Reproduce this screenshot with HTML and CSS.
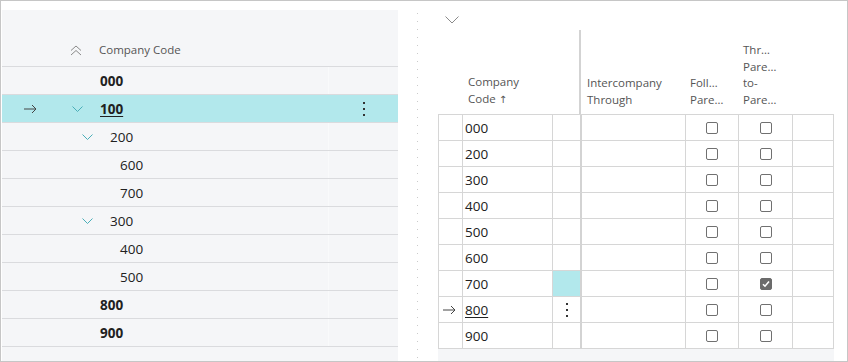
FILE: index.html
```html
<!DOCTYPE html>
<html lang="en">
<head>
  <meta charset="UTF-8" />
  <title>Company Hierarchy</title>
  <link rel="stylesheet" href="styles.css">
</head>
<body>
  <div class="frame">

    <div class="tree">
      <div class="tree-head">
        <span class="collapse-all">
          <svg width="12" height="11" viewBox="0 0 12 11"><path d="M1 5.5 6 1l5 4.5M1 10 6 5.5l5 4.5" fill="none" stroke="#8a8a8a" stroke-width="1"/></svg>
        </span>
        <span class="tree-title">Company Code</span>
      </div>

      <div class="tree-row">
        <div class="t-main"><span class="mark"></span><span class="exp"></span><span class="code bold">000</span></div>
        <div class="t-side"></div>
      </div>
      <div class="tree-row selected">
        <div class="t-main">
          <span class="mark"><svg width="13" height="10" viewBox="0 0 13 10"><path d="M0 5h12M8 1l4 4-4 4" fill="none" stroke="#444" stroke-width="1"/></svg></span>
          <span class="exp"><svg width="11" height="6" viewBox="0 0 11 6"><path d="M.5.5 5.5 5.5 10.5.5" fill="none" stroke="#4aaeb8" stroke-width="1"/></svg></span>
          <span class="code bold link">100</span>
        </div>
        <div class="t-side"><span class="dots"><i></i><i></i><i></i></span></div>
      </div>
      <div class="tree-row lvl1">
        <div class="t-main"><span class="mark"></span><span class="exp"><svg width="11" height="6" viewBox="0 0 11 6"><path d="M.5.5 5.5 5.5 10.5.5" fill="none" stroke="#4aaeb8" stroke-width="1"/></svg></span><span class="code">200</span></div>
        <div class="t-side"></div>
      </div>
      <div class="tree-row lvl2">
        <div class="t-main"><span class="mark"></span><span class="exp"></span><span class="code">600</span></div>
        <div class="t-side"></div>
      </div>
      <div class="tree-row lvl2">
        <div class="t-main"><span class="mark"></span><span class="exp"></span><span class="code">700</span></div>
        <div class="t-side"></div>
      </div>
      <div class="tree-row lvl1">
        <div class="t-main"><span class="mark"></span><span class="exp"><svg width="11" height="6" viewBox="0 0 11 6"><path d="M.5.5 5.5 5.5 10.5.5" fill="none" stroke="#4aaeb8" stroke-width="1"/></svg></span><span class="code">300</span></div>
        <div class="t-side"></div>
      </div>
      <div class="tree-row lvl2">
        <div class="t-main"><span class="mark"></span><span class="exp"></span><span class="code">400</span></div>
        <div class="t-side"></div>
      </div>
      <div class="tree-row lvl2">
        <div class="t-main"><span class="mark"></span><span class="exp"></span><span class="code">500</span></div>
        <div class="t-side"></div>
      </div>
      <div class="tree-row">
        <div class="t-main"><span class="mark"></span><span class="exp"></span><span class="code bold">800</span></div>
        <div class="t-side"></div>
      </div>
      <div class="tree-row">
        <div class="t-main"><span class="mark"></span><span class="exp"></span><span class="code bold">900</span></div>
        <div class="t-side"></div>
      </div>
    </div>

    <div class="splitter"><div class="dotline"></div></div>

    <div class="list">
      <div class="list-bar">
        <svg width="14" height="8" viewBox="0 0 14 8"><path d="M.5.5 7 7 13.5.5" fill="none" stroke="#8a8a8a" stroke-width="1"/></svg>
      </div>

      <div class="g-row g-head">
        <div></div>
        <div><span>Company<br>Code <span class="sort">↑</span></span></div>
        <div class="freeze"></div>
        <div><span>Intercompany<br>Through</span></div>
        <div><span>Foll…<br>Pare…</span></div>
        <div><span>Thr…<br>Pare…<br>to-<br>Pare…</span></div>
        <div></div>
      </div>

      <div class="g-body">
        <div class="g-row"><div></div><div>000</div><div class="freeze"></div><div></div><div><span class="cb"></span></div><div><span class="cb"></span></div><div></div></div>
        <div class="g-row"><div></div><div>200</div><div class="freeze"></div><div></div><div><span class="cb"></span></div><div><span class="cb"></span></div><div></div></div>
        <div class="g-row"><div></div><div>300</div><div class="freeze"></div><div></div><div><span class="cb"></span></div><div><span class="cb"></span></div><div></div></div>
        <div class="g-row"><div></div><div>400</div><div class="freeze"></div><div></div><div><span class="cb"></span></div><div><span class="cb"></span></div><div></div></div>
        <div class="g-row"><div></div><div>500</div><div class="freeze"></div><div></div><div><span class="cb"></span></div><div><span class="cb"></span></div><div></div></div>
        <div class="g-row"><div></div><div>600</div><div class="freeze"></div><div></div><div><span class="cb"></span></div><div><span class="cb"></span></div><div></div></div>
        <div class="g-row"><div></div><div>700</div><div class="freeze active"></div><div></div><div><span class="cb"></span></div><div><span class="cb checked"><svg width="10" height="10" viewBox="0 0 10 10"><path d="M2 5.2 4 7.2 8 2.6" fill="none" stroke="#fff" stroke-width="1.6"/></svg></span></div><div></div></div>
        <div class="g-row">
          <div class="mark-cell"><svg width="13" height="10" viewBox="0 0 13 10"><path d="M0 5h12M8 1l4 4-4 4" fill="none" stroke="#444" stroke-width="1"/></svg></div>
          <div><span class="link">800</span></div>
          <div class="freeze"><span class="dots"><i></i><i></i><i></i></span></div>
          <div></div><div><span class="cb"></span></div><div><span class="cb"></span></div><div></div>
        </div>
        <div class="g-row"><div></div><div>900</div><div class="freeze"></div><div></div><div><span class="cb"></span></div><div><span class="cb"></span></div><div></div></div>
      </div>
      <div class="g-foot"></div>
    </div>

  </div>
</body>
</html>
```

FILE: styles.css
```css
* { box-sizing: border-box; }
body { margin: 0; font-family: "Open Sans", "Noto Sans", sans-serif; color: #212121; }

.frame { width: 848px; height: 362px; border: 1px solid #c6c6c6; display: flex; background: #fff; overflow: hidden; }

/* left tree */
.tree { width: 396px; margin: 9px 0 0 1px; background: #f5f6f8; display: flex; flex-direction: column; }
.tree-head { height: 57px; border-bottom: 1px solid #dadbde; display: flex; align-items: flex-end; padding: 0 0 8px 68px; font-size: 11.5px; color: #555; }
.collapse-all { width: 29px; height: 16px; display: flex; align-items: center; }
.tree-title { line-height: 16px; }
.tree-row { height: 28px; border-bottom: 1px solid #dadbde; display: flex; font-size: 13.5px; }
.tree-row.selected { background: #b2e8ec; }
.t-main { width: 326px; display: flex; align-items: center; }
.t-side { width: 70px; border-left: 1px solid #f9fafb; display: flex; align-items: center; justify-content: center; }
.selected .t-side { border-left-color: transparent; }
.mark { width: 58px; padding-left: 22px; display: flex; align-items: center; }
.exp { width: 40px; padding-left: 12px; display: flex; align-items: center; }
.lvl1 .exp { margin-left: 10px; }
.lvl2 .exp { margin-left: 20px; }
.code.bold { font-weight: 700; }
.link { text-decoration: underline; text-underline-offset: 2px; }

.dots { display: flex; flex-direction: column; gap: 4px; }
.dots i { width: 2px; height: 2px; background: #333; display: block; }

.splitter { width: 40px; }
.dotline { margin: 12px 0 0 19px; width: 1px; height: 100%; background: linear-gradient(#cbcbcb 1px, transparent 1px) 0 0 / 1px 8px; }

/* right list */
.list { width: 396px; display: flex; flex-direction: column; }
.list-bar { height: 29px; padding: 15px 0 0 7px; }
.list-bar svg { display: block; }

.g-row { display: grid; grid-template-columns: 24px 90px 29px 104px 53px 54px 41px; }
.g-head { height: 84px; font-size: 11.5px; color: #555; line-height: 16.5px; }
.g-head > div { display: flex; align-items: flex-end; padding: 0 0 6px 5px; }
.g-head > div:nth-child(2) { padding-left: 6px; }
.g-head > div:nth-child(4) { padding-left: 6px; }
.g-head .freeze { border-right: 2px solid #d3d3d3; }
.sort { font-family: "DejaVu Sans", sans-serif; font-size: 10px; }

.g-body { border-top: 1px solid #d6d6d6; border-left: 1px solid #d6d6d6; }
.g-body .g-row { height: 26px; font-size: 13.5px; }
.g-body .g-row > div { border-right: 1px solid #d6d6d6; border-bottom: 1px solid #d6d6d6; display: flex; align-items: center; }
.g-body .g-row > div:nth-child(2) { padding-left: 2px; }
.g-body .g-row > .freeze { border-right: 2px solid #d3d3d3; justify-content: center; }
.g-body .g-row > .freeze.active { background: #b2e8ec; }
.g-body .g-row > div:nth-child(5),
.g-body .g-row > div:nth-child(6) { justify-content: center; }
.mark-cell { padding-left: 4px; }

.cb { width: 12px; height: 12px; border: 1px solid #707070; border-radius: 2px; display: flex; align-items: center; justify-content: center; }
.cb.checked { background: #6b6b6b; border-color: #6b6b6b; }

.g-foot { flex: 1; background: #f5f6f8; }
```
